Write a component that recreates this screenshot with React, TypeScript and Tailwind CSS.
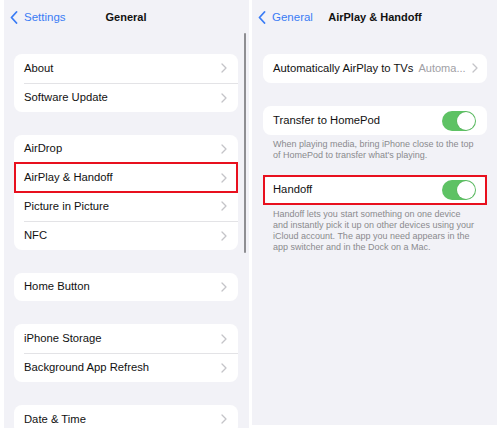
import React from "react";

const Chevron = () => (
  <svg width="6" height="10" viewBox="0 0 6 10" className="shrink-0">
    <path d="M1 1l4 4-4 4" fill="none" stroke="#c4c4c8" strokeWidth="1.3" strokeLinecap="round" strokeLinejoin="round" />
  </svg>
);

const BackChevron = () => (
  <svg width="8" height="13" viewBox="0 0 8 13" className="shrink-0">
    <path d="M6.5 1L1.5 6.5l5 5.5" fill="none" stroke="#3a7cf5" strokeWidth="1.8" strokeLinecap="round" strokeLinejoin="round" />
  </svg>
);

const Toggle = () => (
  <div className="w-[34px] h-[20px] rounded-full bg-[#5ec264] flex items-center justify-end pr-[1px]">
    <div className="w-[18px] h-[18px] rounded-full bg-white shadow-[0_0_0_0.5px_rgba(0,0,0,0.08)]" />
  </div>
);

type RowProps = {
  label: string;
  sep?: boolean;
  highlight?: boolean;
  right?: React.ReactNode;
};

const Row = ({ label, sep, highlight, right }: RowProps) => (
  <div className="relative h-[28.75px] flex items-center pl-[10px]">
    <div className={`flex-1 h-full flex items-center pr-[11px] ${sep ? "border-t border-[#e3e3e6]" : ""}`}>
      <span className="flex-1 text-[11.25px] text-[#111] whitespace-nowrap">{label}</span>
      {right ?? <Chevron />}
    </div>
    {highlight && (
      <div className="absolute left-0 right-0 -top-[1px] -bottom-[1px] border-2 border-[#e8101e]" />
    )}
  </div>
);

const Card = ({ children }: { children: React.ReactNode }) => (
  <div className="bg-white rounded-[8px]">{children}</div>
);

export default function App() {
  return (
    <div
      className="w-[500px] h-[428px] bg-white flex pl-[4px] gap-[3px] overflow-hidden"
      style={{ fontFamily: '"Liberation Sans", Arial, sans-serif' }}
    >
      {/* Left panel */}
      <div className="relative w-[245px] h-[428px] bg-[#f2f2f7] pl-[10px] pr-[11px]">
        <div className="h-[34px] relative">
          <div className="absolute left-[-4px] flex items-center gap-[6px] top-[9px]">
            <BackChevron />
            <span className="text-[11.5px] text-[#3a7cf5]">Settings</span>
          </div>
          <div className="absolute left-0 right-0 text-center top-[9px] text-[11px] font-bold text-[#111]">General</div>
        </div>
        <div className="h-[20px]" />
        <div className="flex flex-col gap-[23px]">
          <Card>
            <Row label="About" />
            <Row label="Software Update" sep />
          </Card>
          <Card>
            <Row label="AirDrop" />
            <Row label="AirPlay & Handoff" highlight />
            <Row label="Picture in Picture" />
            <Row label="NFC" sep />
          </Card>
          <Card>
            <Row label="Home Button" />
          </Card>
          <Card>
            <Row label="iPhone Storage" />
            <Row label="Background App Refresh" sep />
          </Card>
          <Card>
            <Row label="Date & Time" />
          </Card>
        </div>
        <div className="absolute right-[3px] top-[33px] w-[2px] h-[220px] rounded-full bg-[#8e8e92]" />
      </div>

      {/* Right panel */}
      <div className="w-[245px] h-[425px] bg-[#f2f2f7] pl-[11px] pr-[10px]">
        <div className="h-[34px] relative">
          <div className="absolute left-[-5px] flex items-center gap-[6px] top-[9px]">
            <BackChevron />
            <span className="text-[11.5px] text-[#3a7cf5]">General</span>
          </div>
          <div className="absolute left-0 right-0 text-center top-[9px] text-[11px] font-bold text-[#111]">AirPlay &amp; Handoff</div>
        </div>
        <div className="h-[20px]" />
        <Card>
          <Row
            label="Automatically AirPlay to TVs"
            right={
              <div className="flex items-center gap-[6px] ml-[5px]">
                <span className="text-[11px] text-[#a0a0a5] whitespace-nowrap">Automa...</span>
                <Chevron />
              </div>
            }
          />
        </Card>
        <div className="h-[23.5px]" />
        <Card>
          <Row label="Transfer to HomePod" right={<Toggle />} />
        </Card>
        <div className="px-[10px] pt-[4px] text-[9px] leading-[10.5px] text-[#8a8a8e]">
          When playing media, bring iPhone close to the top of HomePod to transfer what's playing.
        </div>
        <div className="h-[15.5px]" />
        <Card>
          <Row label="Handoff" right={<Toggle />} highlight />
        </Card>
        <div className="px-[10px] pt-[5px] text-[9px] leading-[11px] text-[#8a8a8e]">
          Handoff lets you start something on one device and instantly pick it up on other devices using your iCloud account. The app you need appears in the app switcher and in the Dock on a Mac.
        </div>
      </div>
    </div>
  );
}
